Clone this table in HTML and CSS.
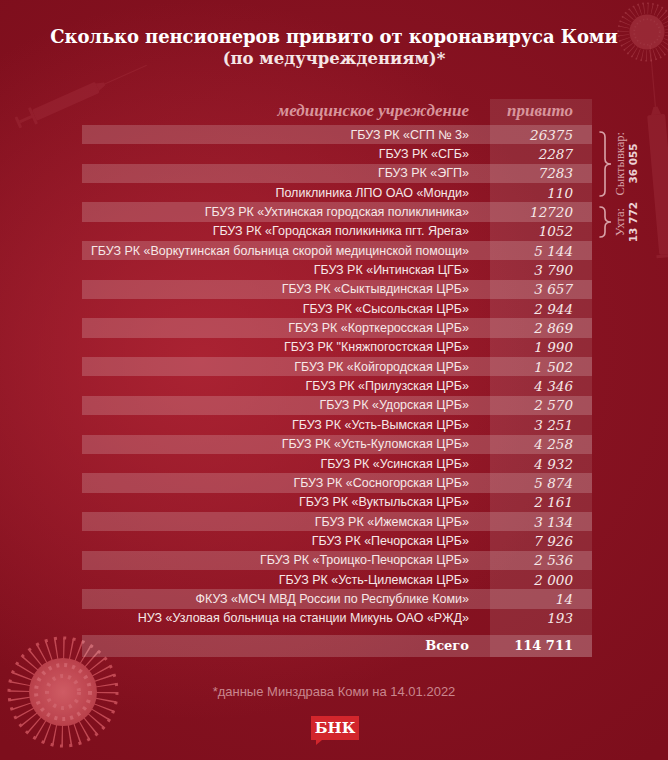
FILE: index.html
```html
<!DOCTYPE html>
<html lang="ru">
<head>
<meta charset="utf-8">
<title>Сколько пенсионеров привито от коронавируса Коми</title>
<link rel="stylesheet" href="styles.css">
</head>
<body>
<div class="page">
  <svg class="deco deco-syringe-tl" viewBox="0 0 150 80" aria-hidden="true">
    <g transform="translate(7 68) rotate(-24)" fill="#d0606a">
      <rect x="0" y="-6" width="3" height="12" rx="1"/>
      <rect x="3" y="-1.5" width="14" height="3"/>
      <rect x="16" y="-9" width="3" height="18" rx="1"/>
      <rect x="19" y="-6" width="69" height="12" rx="2"/>
      <path d="M88 -4 L96 -1.5 L96 1.5 L88 4 Z"/>
      <rect x="96" y="-0.5" width="46" height="1"/>
    </g>
  </svg>
  <svg class="deco deco-syringe-tr" viewBox="0 0 40 240" aria-hidden="true">
    <g transform="translate(20 5) rotate(85)" fill="#d0606a">
      <rect x="0" y="-0.6" width="62" height="1.2"/>
      <path d="M62 -2 L70 -5 L70 5 L62 2 Z"/>
      <rect x="70" y="-9" width="140" height="18" rx="2"/>
      <rect x="210" y="-12" width="3" height="24"/>
    </g>
  </svg>
  <svg class="deco deco-virus-tr" viewBox="-60 -60 120 120" aria-hidden="true">
    <circle r="44" fill="none" stroke="#d06a72" stroke-width="20" stroke-dasharray="1.3 6.38"/>
    <circle r="54" fill="none" stroke="#d06a72" stroke-width="3" stroke-dasharray="3 6.42"/>
    <circle r="33" fill="#c85a63"/>
    <circle r="24" fill="none" stroke="#e08088" stroke-width="3" stroke-dasharray="2 5"/>
  </svg>
  <svg class="deco deco-virus-bl" viewBox="-60 -60 120 120" aria-hidden="true">
    <defs>
      <radialGradient id="vbody">
        <stop offset="0" stop-color="#d8646c"/>
        <stop offset="1" stop-color="#c04650"/>
      </radialGradient>
    </defs>
    <circle r="43" fill="none" stroke="#c84f59" stroke-width="22" stroke-dasharray="1.3 6.2"/>
    <circle r="54" fill="none" stroke="#c84f59" stroke-width="3" stroke-dasharray="3 6.42"/>
    <circle r="34" fill="url(#vbody)"/>
    <circle r="27" fill="none" stroke="#d86a73" stroke-width="4" stroke-dasharray="3 5"/>
    <circle r="16" fill="none" stroke="#d86a73" stroke-width="4" stroke-dasharray="3 5"/>
  </svg>

  <header class="head">
    <h1 class="title">Сколько пенсионеров привито от коронавируса Коми</h1>
    <p class="subtitle">(по медучреждениям)*</p>
  </header>

  <div class="table">
    <div class="c-label hdr">медицинское учреждение</div>
    <div class="c-val hdr">привито</div>

    <div class="c-label odd">ГБУЗ РК «СГП № 3»</div><div class="c-val odd">26375</div>
    <div class="c-label">ГБУЗ РК «СГБ»</div><div class="c-val">2287</div>
    <div class="c-label odd">ГБУЗ РК «ЭГП»</div><div class="c-val odd">7283</div>
    <div class="c-label">Поликлиника ЛПО ОАО «Монди»</div><div class="c-val">110</div>
    <div class="c-label odd">ГБУЗ РК «Ухтинская городская поликлиника»</div><div class="c-val odd">12720</div>
    <div class="c-label">ГБУЗ РК «Городская поликиника пгт. Ярега»</div><div class="c-val">1052</div>
    <div class="c-label odd">ГБУЗ РК «Воркутинская больница скорой медицинской помощи»</div><div class="c-val odd">5 144</div>
    <div class="c-label">ГБУЗ РК «Интинская ЦГБ»</div><div class="c-val">3 790</div>
    <div class="c-label odd">ГБУЗ РК «Сыктывдинская ЦРБ»</div><div class="c-val odd">3 657</div>
    <div class="c-label">ГБУЗ РК «Сысольская ЦРБ»</div><div class="c-val">2 944</div>
    <div class="c-label odd">ГБУЗ РК «Корткеросская ЦРБ»</div><div class="c-val odd">2 869</div>
    <div class="c-label">ГБУЗ РК "Княжпогостская ЦРБ»</div><div class="c-val">1 990</div>
    <div class="c-label odd">ГБУЗ РК «Койгородская ЦРБ»</div><div class="c-val odd">1 502</div>
    <div class="c-label">ГБУЗ РК «Прилузская ЦРБ»</div><div class="c-val">4 346</div>
    <div class="c-label odd">ГБУЗ РК «Удорская ЦРБ»</div><div class="c-val odd">2 570</div>
    <div class="c-label">ГБУЗ РК «Усть-Вымская ЦРБ»</div><div class="c-val">3 251</div>
    <div class="c-label odd">ГБУЗ РК «Усть-Куломская ЦРБ»</div><div class="c-val odd">4 258</div>
    <div class="c-label">ГБУЗ РК «Усинская ЦРБ»</div><div class="c-val">4 932</div>
    <div class="c-label odd">ГБУЗ РК «Сосногорская ЦРБ»</div><div class="c-val odd">5 874</div>
    <div class="c-label">ГБУЗ РК «Вуктыльская ЦРБ»</div><div class="c-val">2 161</div>
    <div class="c-label odd">ГБУЗ РК «Ижемская ЦРБ»</div><div class="c-val odd">3 134</div>
    <div class="c-label">ГБУЗ РК «Печорская ЦРБ»</div><div class="c-val">7 926</div>
    <div class="c-label odd">ГБУЗ РК «Троицко-Печорская ЦРБ»</div><div class="c-val odd">2 536</div>
    <div class="c-label">ГБУЗ РК «Усть-Цилемская ЦРБ»</div><div class="c-val">2 000</div>
    <div class="c-label odd">ФКУЗ «МСЧ МВД России по Республике Коми»</div><div class="c-val odd">14</div>
    <div class="c-label">НУЗ «Узловая больница на станции Микунь ОАО «РЖД»</div><div class="c-val">193</div>

    <div class="c-label gap"></div><div class="c-val gap"></div>
    <div class="c-label total">Всего</div><div class="c-val total">114 711</div>

    <div class="note note-1">
      <svg class="brace brace-1" viewBox="0 0 13 66" aria-hidden="true">
        <path d="M1 1 Q6 1 6 6 V28 Q6 33 12 33 Q6 33 6 38 V60 Q6 65 1 65"/>
      </svg>
      <div class="note-text"><span class="note-city">Сыктывкар:</span><span class="note-num">36 055</span></div>
    </div>
    <div class="note note-2">
      <svg class="brace brace-2" viewBox="0 0 13 32" aria-hidden="true">
        <path d="M1 1 Q6 1 6 6 V11 Q6 16 12 16 Q6 16 6 21 V26 Q6 31 1 31"/>
      </svg>
      <div class="note-text"><span class="note-city">Ухта:</span><span class="note-num">13 772</span></div>
    </div>
  </div>

  <p class="foot">*данные Минздрава Коми на 14.01.2022</p>
  <div class="logo-wrap"><span class="logo">БНК</span></div>
</div>
</body>
</html>
```
FILE: styles.css
```css
html, body {
  margin: 0;
  padding: 0;
}
body {
  width: 668px;
  height: 760px;
  overflow: hidden;
  background: #861222;
}
.page {
  position: relative;
  width: 668px;
  height: 760px;
  overflow: hidden;
  background:
    radial-gradient(ellipse 380px 360px at 200px 360px, rgba(178, 38, 54, 0.8) 0%, rgba(178, 38, 54, 0) 100%),
    radial-gradient(ellipse 520px 520px at 50% 45%, #901626 0%, #7d0e1c 100%);
  font-family: "Liberation Sans", Arial, sans-serif;
  color: #f5e6e6;
}
.deco {
  position: absolute;
  z-index: 0;
}
.deco-syringe-tl {
  left: 10px;
  top: 55px;
  width: 150px;
  height: 80px;
  opacity: 0.14;
}
.deco-syringe-tr {
  left: 630px;
  top: 40px;
  width: 40px;
  height: 240px;
  opacity: 0.16;
}
.deco-virus-tr {
  left: 615px;
  top: 0;
  width: 64px;
  height: 64px;
  opacity: 0.33;
}
.deco-virus-bl {
  left: 3px;
  top: 632px;
  width: 120px;
  height: 120px;
  opacity: 0.9;
}
.head, .table, .foot, .logo-wrap {
  position: relative;
  z-index: 1;
}
.head {
  padding-top: 26px;
  text-align: center;
}
.title {
  margin: 0;
  font-family: "DejaVu Serif", serif;
  font-weight: bold;
  font-size: 18px;
  line-height: 22px;
  color: #ffffff;
  letter-spacing: -0.1px;
}
.subtitle {
  margin: 0;
  font-family: "DejaVu Serif", serif;
  font-weight: bold;
  font-size: 16.5px;
  line-height: 22px;
  color: #f5e6e6;
}
.table {
  margin: 29px 0 0 82px;
  display: grid;
  grid-template-columns: 408px 102px 76px;
  grid-template-rows: 26px repeat(26, 19.35px) 7px 22px;
}
.c-label {
  grid-column: 1;
  display: flex;
  align-items: center;
  justify-content: flex-end;
  padding-right: 21px;
  font-size: 12.5px;
  white-space: nowrap;
  color: #f6e8e8;
}
.c-val {
  grid-column: 2;
  display: flex;
  align-items: center;
  justify-content: flex-end;
  padding-right: 19px;
  font-family: "DejaVu Serif", serif;
  font-style: italic;
  font-size: 13.5px;
  color: #f6e8e8;
  background: rgba(255, 255, 255, 0.1);
}
.c-label.odd {
  background: rgba(255, 255, 255, 0.18);
}
.c-val.odd {
  background: rgba(255, 255, 255, 0.26);
}
.hdr {
  font-family: "Liberation Serif", "Times New Roman", serif;
  font-style: italic;
  font-weight: bold;
  font-size: 17px;
  color: #d8959c;
  padding-bottom: 2px;
}
.c-val.hdr {
  font-style: italic;
  font-size: 17px;
  color: #d8959c;
}
.c-label.hdr {
  background: none;
}
.c-label.total {
  background: rgba(255, 255, 255, 0.18);
  font-family: "DejaVu Serif", serif;
  font-weight: bold;
  font-size: 13px;
  color: #ffffff;
}
.c-val.total {
  background: rgba(255, 255, 255, 0.26);
  font-family: "DejaVu Serif", serif;
  font-style: normal;
  font-weight: bold;
  font-size: 13px;
  color: #ffffff;
}
.note {
  grid-column: 3;
  display: flex;
  align-items: center;
}
.note-1 {
  grid-row: 2 / 6;
}
.note-2 {
  grid-row: 6 / 8;
}
.brace {
  margin-left: 7px;
  width: 13px;
  fill: none;
  stroke: #d9a3a9;
  stroke-width: 1.6;
  stroke-linecap: round;
}
.brace-1 {
  height: 66px;
}
.brace-2 {
  height: 32px;
}
.note-text {
  margin-left: 2px;
  writing-mode: vertical-rl;
  transform: rotate(180deg);
  text-align: center;
  line-height: 13px;
  white-space: nowrap;
}
.note-city {
  display: block;
  font-family: "Liberation Serif", serif;
  font-size: 12.5px;
  color: #d9a3a9;
}
.note-num {
  display: block;
  font-family: "DejaVu Sans", sans-serif;
  font-weight: bold;
  font-size: 10.5px;
  color: #ecd0d3;
}
.foot {
  margin: 27px 0 0;
  text-align: center;
  font-size: 13px;
  line-height: 16px;
  color: #c9868e;
}
.logo-wrap {
  margin-top: 16px;
  display: flex;
  justify-content: center;
}
.logo {
  position: relative;
  display: block;
  width: 48px;
  height: 24px;
  margin-left: 2px;
  background: #d2262c;
  color: #ffffff;
  font-family: "DejaVu Serif", serif;
  font-weight: bold;
  font-size: 15px;
  line-height: 24px;
  text-align: center;
}
.logo::after {
  content: "";
  position: absolute;
  left: 5px;
  bottom: -5px;
  border-top: 5px solid #d2262c;
  border-right: 6px solid transparent;
}
```
